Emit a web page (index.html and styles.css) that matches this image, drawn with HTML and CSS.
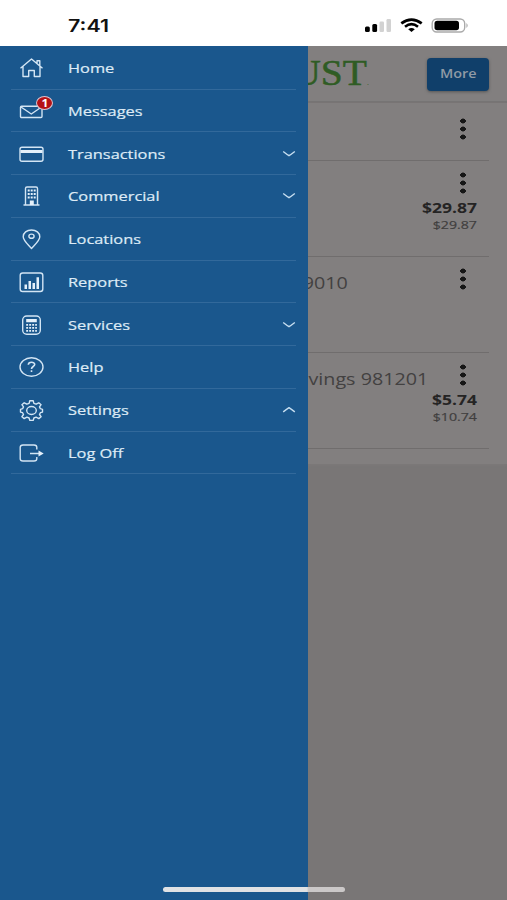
FILE: index.html
```html
<!DOCTYPE html>
<html lang="en">
<head>
<meta charset="utf-8">
<meta name="viewport" content="width=device-width">
<title>Accounts</title>
<link rel="stylesheet" href="styles.css">
</head>
<body>
<div class="phone">
  <header class="status">
    <span class="time">7:41</span>
    <svg class="indicators" width="106" height="18" viewBox="364 16 106 18">
      <g fill="#000"><rect x="365" y="26.500" width="4.800" height="5.500" rx="1.500"/><rect x="372.300" y="24" width="4.800" height="8" rx="1.500"/></g>
      <g fill="#d2d2d2"><rect x="379.500" y="21.500" width="4.500" height="10.500" rx="1.200"/><rect x="386.500" y="19" width="4.500" height="13" rx="1.200"/></g>
      <g fill="none" stroke="#000" stroke-width="2.700"><path d="M401.300 23.400Q411.500 15.800 421.700 23.400"/><path d="M405 26.700Q411.500 21.700 418 26.700"/></g>
      <path d="M408.200 29.200Q411.500 26.800 414.800 29.200L411.500 32Z" fill="#000"/>
      <rect x="432.200" y="19" width="32.500" height="13" rx="4.500" fill="none" stroke="#aaa" stroke-width="1.400"/>
      <rect x="434.500" y="20.800" width="24.500" height="9.400" rx="2.700" fill="#000"/>
      <path d="M466.500 23Q468.700 25.500 466.500 28Z" fill="#999"/>
    </svg>
  </header>
  <div class="screen">
    <nav class="drawer">
      <ul class="menu">
        <li class="item"><svg class="icon" viewBox="0 0 28 24"><path d="M3 12.200L14 3l11 9.200M5.500 10.300V20.500h5.700v-6h5.600v6h5.700V10.300M19.500 7.500V4.700h2.800v5"/></svg><span class="label">Home</span></li>
        <li class="item"><svg class="icon" viewBox="0 0 28 24"><rect x="3" y="7.300" width="21.500" height="11.200" rx="1"/><path d="M3.500 8l10.300 7L24 8"/></svg><span class="badge"><b>1</b></span><span class="label">Messages</span></li>
        <li class="item"><svg class="icon" viewBox="0 0 28 24"><rect x="2.500" y="5.300" width="23" height="14" rx="2"/><path class="solid" d="M3 8h22v3H3z"/></svg><span class="label">Transactions</span><svg class="chev" viewBox="0 0 14 8"><path d="M1.200 1.500Q5 4.500 7 5.700Q9 4.500 12.800 1.500"/></svg></li>
        <li class="item"><svg class="icon" viewBox="0 0 28 24"><path d="M6 21h16M8 21V4.500Q8 3 9.500 3h9Q20 3 20 4.500V21"/><path class="solid" d="M10.200 5.500h2v2h-2zm3 0h2v2h-2zm3 0h2v2h-2zM10.200 9h2v2h-2zm3 0h2v2h-2zm3 0h2v2h-2zM10.200 12.500h2v2h-2zm3 0h2v2h-2zm3 0h2v2h-2zM12.300 16.500h4V21h-4z"/></svg><span class="label">Commercial</span><svg class="chev" viewBox="0 0 14 8"><path d="M1.200 1.500Q5 4.500 7 5.700Q9 4.500 12.800 1.500"/></svg></li>
        <li class="item"><svg class="icon" viewBox="0 0 28 24"><path d="M14 21.500C11 18 5.700 13.500 5.700 9.700C5.700 5.700 9.300 3 14 3s8.300 2.700 8.300 6.700C22.300 13.500 17 18 14 21.500Z"/><ellipse cx="14" cy="9.200" rx="2.600" ry="2.100"/></svg><span class="label">Locations</span></li>
        <li class="item"><svg class="icon" viewBox="0 0 28 24"><rect x="2.700" y="3" width="22.600" height="18.500" rx="2.500"/><path class="solid" d="M7 14.500h2.500V19H7zM11 11h2.500v8H11zm4 2h2.500v6H15zm4-5.700h2.500V19H19z"/></svg><span class="label">Reports</span></li>
        <li class="item"><svg class="icon" viewBox="0 0 28 24"><rect x="5.200" y="3" width="17.600" height="18.200" rx="4"/><path class="solid" d="M8.700 6h10.600v3.300H8.700zM8.700 11h1.900v1.700H8.700zm3 0h1.900v1.700h-1.900zm3 0h1.900v1.700h-1.900zm3 0h1.700v1.700h-1.700zM8.700 14h1.900v1.700H8.700zm3 0h1.900v1.700h-1.900zm3 0h1.900v1.700h-1.900zm3 0h1.700v1.700h-1.700zM8.700 17h1.900v1.700H8.700zm3 0h1.900v1.700h-1.900zm3 0h1.900v1.700h-1.900zm3 0h1.700v1.700h-1.700z"/></svg><span class="label">Services</span><svg class="chev" viewBox="0 0 14 8"><path d="M1.200 1.500Q5 4.500 7 5.700Q9 4.500 12.800 1.500"/></svg></li>
        <li class="item"><svg class="icon" viewBox="0 0 28 24"><ellipse cx="14" cy="12" rx="11.500" ry="9.300"/><path class="thick" d="M10.800 9.800C10.900 6.400 17.300 6.500 17.200 9.500C17.100 11.500 14 11.600 14 13.900M14 15.300v1.700"/></svg><span class="label">Help</span></li>
        <li class="item"><svg class="icon" viewBox="0 0 28 24"><path d="M12.300 2.800h3.400l.7 2.600 2.200.8 2.700-1.400 2.300 1.900-1.600 2.200.9 1.800 2.100.6v2.800l-2.100.6-.9 1.800 1.600 2.200-2.300 1.900-2.700-1.400-2.200.8-.7 2.400h-3.400l-.7-2.400-2.200-.8-2.700 1.400-2.300-1.900L6 16.500l-.9-1.800-2.100-.6v-2.800l2.100-.6L6 8.900 4.400 6.700l2.300-1.900 2.700 1.400 2.200-.8z"/><ellipse cx="14" cy="12.500" rx="4.800" ry="4"/></svg><span class="label">Settings</span><svg class="chev" viewBox="0 0 14 8"><path d="M1.200 5.900Q5 2.900 7 1.700Q9 2.900 12.800 5.900"/></svg></li>
        <li class="item"><svg class="icon" viewBox="0 0 28 24"><path d="M19.300 8.500V6.300Q19.300 4 16.500 4h-11Q2.700 4 2.700 6.300v11.400Q2.700 20 5.500 20h11Q19.300 20 19.300 17.700V16M12.500 12.500H22"/><path class="solid" d="M21 9.600L26.200 12.500L21 15.400Z"/></svg><span class="label">Log Off</span></li>
      </ul>
    </nav>
    <main class="page">
      <div class="topbar"><span class="logo">UST<small>.</small></span><span class="more"><span>More</span></span></div>
      <section class="accounts">
        <div class="acct first"><i class="dots"></i></div>
        <div class="acct"><i class="dots"></i><p class="bal">$29.87</p><p class="sub">$29.87</p></div>
        <div class="acct"><h2 class="name short">9010</h2><i class="dots"></i></div>
        <div class="acct"><h2 class="name">vings 981201</h2><i class="dots"></i><p class="bal">$5.74</p><p class="sub">$10.74</p></div>
      </section>
    </main>
  </div>
  <div class="homebar"></div>
</div>
</body>
</html>
```
FILE: styles.css
```css
* { box-sizing: border-box; margin: 0; padding: 0; }
body { width: 507px; height: 900px; overflow: hidden; font-family: "Open Sans", sans-serif; }
.phone { position: relative; width: 507px; height: 900px; display: flex; flex-direction: column; }
.status { height: 46px; background: #fff; display: flex; justify-content: space-between; align-items: flex-start; padding: 16px 37px 0 68px; }
.time { font: 600 17px/20px Inter, sans-serif; color: #111; transform: scaleX(1.26); transform-origin: left; }
.screen { flex: 1; display: flex; min-height: 0; }
.drawer { width: 308px; flex: none; background: #1a578d; z-index: 1; }
.menu { list-style: none; margin: 0 12px 0 11px; padding-top: 0.8px; }
.item { position: relative; height: 42.75px; display: flex; align-items: center; border-bottom: 1px solid #32699b; padding: 1px 0 0 6px; }
.icon { width: 28px; height: 24px; flex: none; fill: none; stroke: #d3e5f4; stroke-width: 1.4; stroke-linejoin: round; transform: translateX(.5px); }
.icon .solid { fill: #e4f0fa; stroke: none; }
.icon .thick { stroke-width: 1.6; }
.label { margin-left: 23px; font-size: 13px; line-height: 20px; font-weight: 500; color: #deebf6; -webkit-text-stroke: .2px #deebf6; white-space: nowrap; transform: scaleX(1.26); transform-origin: left; }
.chev { width: 14px; height: 8px; margin-left: auto; fill: none; stroke: #c6def0; stroke-width: 1.4; }
.badge { position: absolute; left: 25px; top: 6px; width: 17px; height: 14px; border-radius: 50%; border: 1px solid #d8c4cf; background: #b51216; color: #fff; font-size: 10px; line-height: 12px; text-align: center; }
.badge b { display: inline-block; transform: scaleX(1.2); }
.page { flex: 1; background: #797676; min-width: 0; }
.topbar { height: 57px; background: #827f7f; border-bottom: 2px solid #777474; display: flex; justify-content: flex-end; align-items: flex-start; padding: 12px 18px 0 0; }
.logo { flex: none; font: 35px/31px "Liberation Serif", serif; color: #2f5c24; -webkit-text-stroke: .5px #2f5c24; transform: scaleX(1.13); transform-origin: right; margin-right: 58px; white-space: nowrap; }
.logo small { font-size: 7px; -webkit-text-stroke: 0; }
.more { flex: none; width: 62px; height: 33px; border-radius: 4px; background: #103f6a; box-shadow: 0 1px 3px #555; color: #8f9aa5; font-size: 12px; font-weight: 600; line-height: 31px; text-align: center; }
.more span { display: inline-block; transform: scaleX(1.2); }
.accounts { background: #827f7f; height: 361px; padding-right: 18px; box-shadow: 0 1px 3px #7d7a7a; }
.acct { position: relative; height: 96px; border-bottom: 1px solid #706d6d; padding: 11px 12px 0 0; display: flex; flex-direction: column; align-items: flex-end; }
.acct.first { height: 58px; padding-top: 15px; }
.dots { width: 6px; height: 22px; margin-right: 11px; background: radial-gradient(ellipse 3px 2.7px at 3px 3px, #161616 85%, transparent) 0 0 / 6px 8px; flex: none; }
.bal { font-size: 14px; font-weight: 700; line-height: 18px; color: #252424; margin-top: 5px; transform: scaleX(1.25); transform-origin: right; }
.sub { font-size: 11.5px; font-weight: 500; line-height: 15px; color: #403e3e; -webkit-text-stroke: .2px #403e3e; transform: scaleX(1.23); transform-origin: right; }
.name { position: absolute; right: 61px; top: 14px; font-size: 17px; font-weight: 400; line-height: 24px; color: #434141; white-space: nowrap; transform: scaleX(1.16); transform-origin: right; }
.name.short { right: 141px; }
.homebar { position: absolute; z-index: 2; left: 163px; top: 887px; width: 182px; height: 5px; border-radius: 3px; background: linear-gradient(90deg, #e0e2e4 79%, #cbc8c8 80%); }
```
